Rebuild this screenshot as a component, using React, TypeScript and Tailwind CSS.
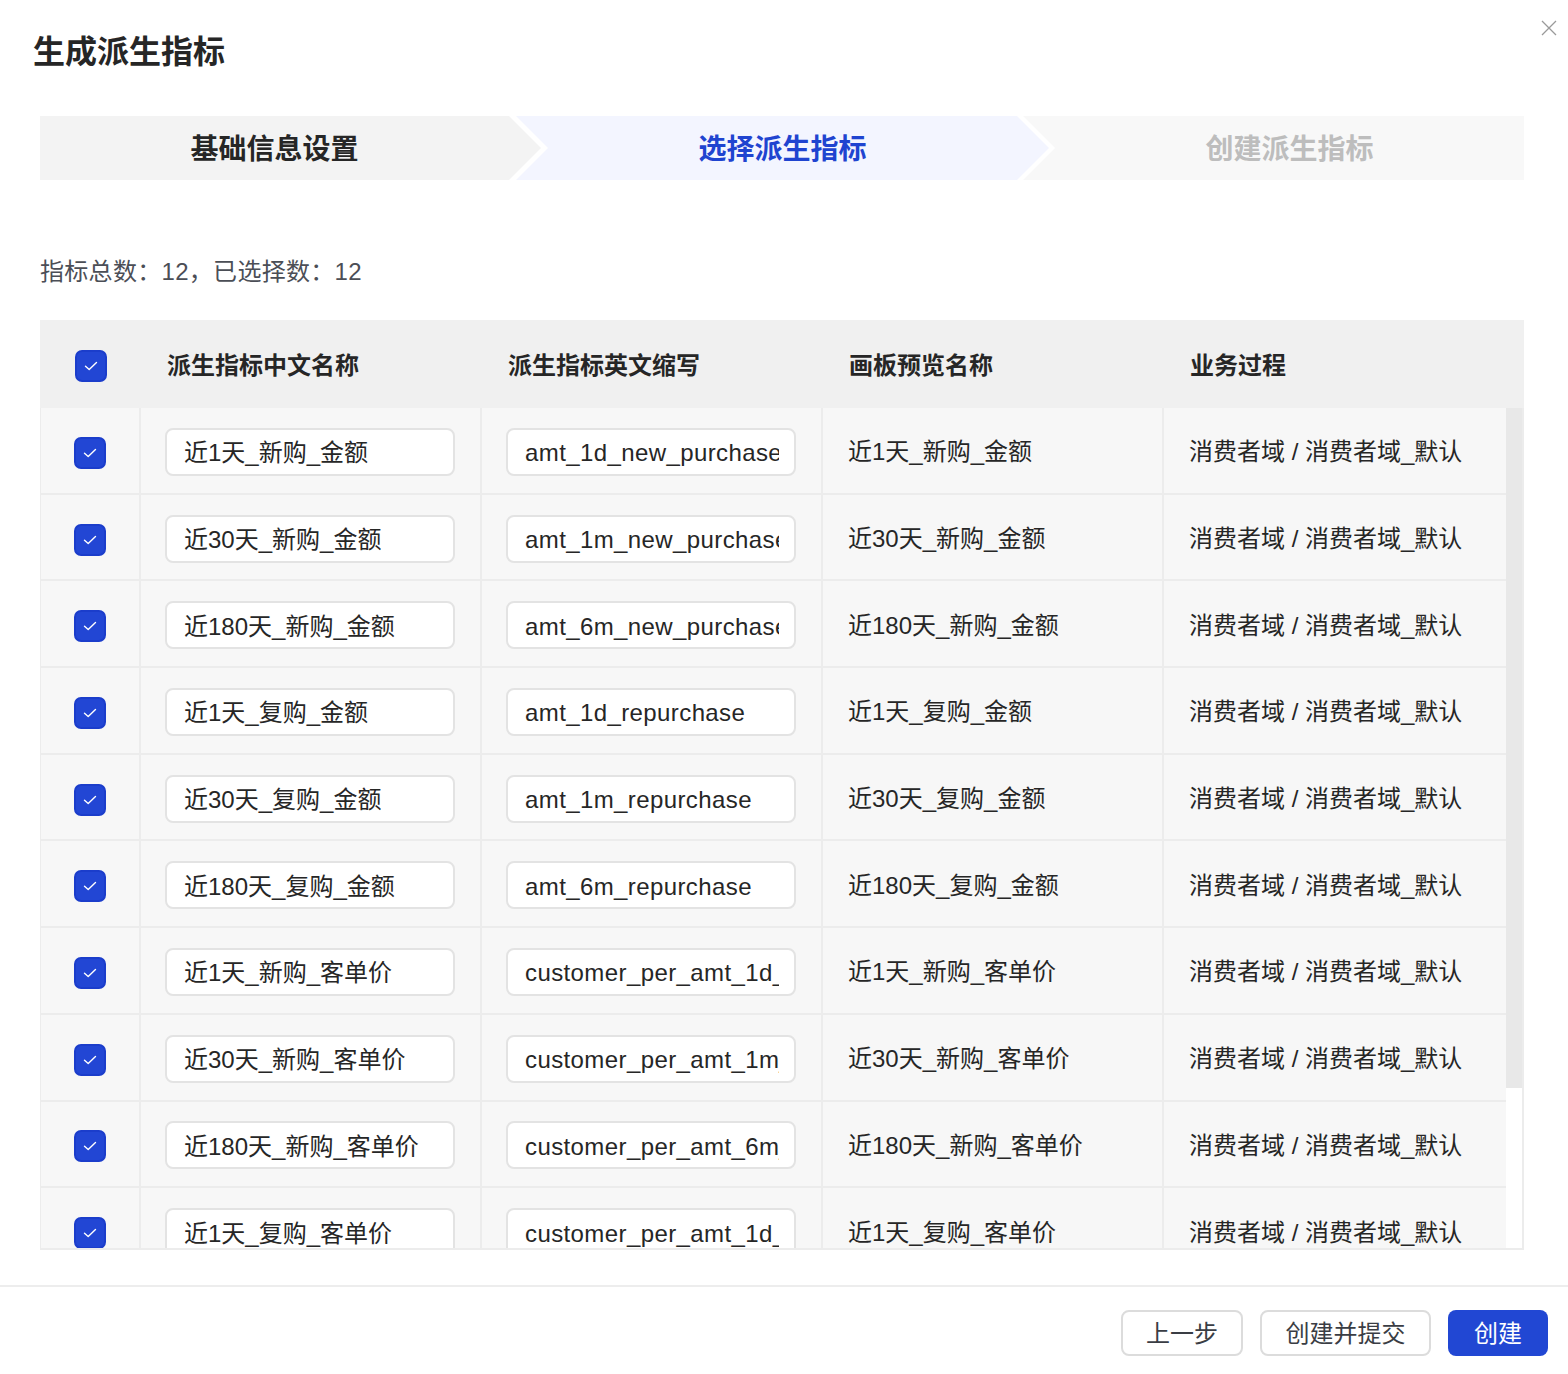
import React from "react";

const rows = [
  { cn: "近1天_新购_金额", en: "amt_1d_new_purchase" },
  { cn: "近30天_新购_金额", en: "amt_1m_new_purchase" },
  { cn: "近180天_新购_金额", en: "amt_6m_new_purchase" },
  { cn: "近1天_复购_金额", en: "amt_1d_repurchase" },
  { cn: "近30天_复购_金额", en: "amt_1m_repurchase" },
  { cn: "近180天_复购_金额", en: "amt_6m_repurchase" },
  { cn: "近1天_新购_客单价", en: "customer_per_amt_1d_new_purchase" },
  { cn: "近30天_新购_客单价", en: "customer_per_amt_1m_new_purchase" },
  { cn: "近180天_新购_客单价", en: "customer_per_amt_6m_new_purchase" },
  { cn: "近1天_复购_客单价", en: "customer_per_amt_1d_repurchase" },
  { cn: "近30天_复购_客单价", en: "customer_per_amt_1m_repurchase" },
  { cn: "近180天_复购_客单价", en: "customer_per_amt_6m_repurchase" },
];

function Checkbox() {
  return (
    <div className="w-[32px] h-[32px] rounded-[7px] bg-[#2246d4] border-2 border-[#1b3dcb] flex items-center justify-center">
      <svg width="14" height="10" viewBox="0 0 14 10" fill="none">
        <path d="M1.5 5.2 L5.2 8.6 L12.5 1.4" stroke="#ffffff" strokeWidth="1.4" strokeLinecap="round" strokeLinejoin="round" />
      </svg>
    </div>
  );
}

function TextInput({ value, latin }: { value: string; latin?: boolean }) {
  return (
    <div className="w-[290px] h-[48px] bg-white border-2 border-[#e3e3e3] rounded-[8px] pl-[17px] pr-[15px] pt-[3px] flex items-center">
      <span
        className={`block overflow-hidden whitespace-nowrap text-[24px] text-[#262626] leading-[34px] ${
          latin ? "tracking-[0.4px]" : ""
        }`}
      >
        {value}
      </span>
    </div>
  );
}

export default function App() {
  return (
    <div className="relative w-[1568px] h-[1374px] bg-white font-['Liberation_Sans','Noto_Sans_CJK_SC',sans-serif] text-[#262626]">
      {/* Header */}
      <div className="pl-[33px] pt-[32px] h-[116px]">
        <h1 className="text-[32px] leading-[40px] font-bold text-[#262626]">生成派生指标</h1>
      </div>
      <button className="absolute top-[20px] right-[11px] w-[16px] h-[16px]">
        <svg width="16" height="16" viewBox="0 0 16 16" fill="none">
          <path d="M1 1 L15 15 M15 1 L1 15" stroke="#9a9a9a" strokeWidth="1.3" />
        </svg>
      </button>

      {/* Steps */}
      <div className="ml-[40px] w-[1484px] h-[64px] flex text-[28px] font-bold">
        <div className="w-[501px] h-full shrink-0 bg-[#f3f3f3] pr-[32px] pt-[4px] flex items-center justify-center text-[#262626] [clip-path:polygon(0_0,469px_0,501px_32px,469px_64px,0_64px)]">
          基础信息设置
        </div>
        <div className="ml-[-25px] w-[533px] h-full shrink-0 bg-[#f3f5ff] px-[32px] pt-[4px] flex items-center justify-center text-[#1f44d0] [clip-path:polygon(0_0,501px_0,533px_32px,501px_64px,0_64px,32px_32px)]">
          选择派生指标
        </div>
        <div className="ml-[-26px] flex-1 h-full bg-[#f8f8f8] pl-[32px] pt-[4px] flex items-center justify-center text-[#bdbdbd] [clip-path:polygon(0_0,100%_0,100%_100%,0_100%,32px_32px)]">
          创建派生指标
        </div>
      </div>

      {/* Summary */}
      <div className="mt-[78px] pl-[40px] h-[28px] text-[24px] leading-[28px] tracking-[0.3px] text-[#4b4e56]">
        指标总数：12，已选择数：12
      </div>

      {/* Table */}
      <div className="mt-[34px] ml-[40px] w-[1484px] h-[930px] flex flex-col">
        <div className="h-[88px] shrink-0 bg-[#f0f0f0] pt-[4px] flex items-center text-[24px] font-bold text-[#262626]">
          <div className="w-[101px] flex justify-center pl-[1px]">
            <Checkbox />
          </div>
          <div className="w-[341px] pl-[26px]">派生指标中文名称</div>
          <div className="w-[341px] pl-[26px]">派生指标英文缩写</div>
          <div className="w-[341px] pl-[26px]">画板预览名称</div>
          <div className="w-[342px] pl-[26px]">业务过程</div>
        </div>
        <div className="flex-1 flex overflow-hidden border-l border-b-2 border-r-2 border-[#ececec]">
          <div className="w-[1465px] shrink-0 overflow-hidden bg-[#f7f7f7]">
            {rows.map((r, i) => (
              <div key={i} className="h-[86.7px] flex border-b-2 border-[#ececec] text-[24px]">
                <div className="w-[100px] border-r-2 border-[#ececec] pt-[5px] flex items-center justify-center">
                  <Checkbox />
                </div>
                <div className="w-[341px] border-r-2 border-[#ececec] pl-[24px] pt-[3px] flex items-center">
                  <TextInput value={r.cn} />
                </div>
                <div className="w-[341px] border-r-2 border-[#ececec] pl-[24px] pt-[3px] flex items-center">
                  <TextInput value={r.en} latin />
                </div>
                <div className="w-[341px] border-r-2 border-[#ececec] pl-[25px] pt-[4px] flex items-center text-[#262626]">
                  {r.cn}
                </div>
                <div className="flex-1 pl-[25px] pt-[4px] flex items-center text-[#262626] whitespace-nowrap">
                  消费者域 / 消费者域_默认
                </div>
              </div>
            ))}
          </div>
          <div className="w-[16px] shrink-0 bg-white">
            <div className="h-[680px] bg-[#e8e8e8]" />
          </div>
        </div>
      </div>

      {/* Footer */}
      <div className="mt-[35px] border-t-2 border-[#ededed] h-[89px] flex items-center justify-end gap-[17px] pr-[20px] pt-[4px] text-[24px]">
        <button className="w-[122px] h-[46px] rounded-[8px] border-2 border-[#dcdcdc] bg-white pt-[3px] text-[#3a3d44]">上一步</button>
        <button className="w-[171px] h-[46px] rounded-[8px] border-2 border-[#dcdcdc] bg-white pt-[3px] text-[#3a3d44]">创建并提交</button>
        <button className="w-[100px] h-[46px] rounded-[8px] bg-[#2147d3] pt-[3px] text-white">创建</button>
      </div>
    </div>
  );
}
